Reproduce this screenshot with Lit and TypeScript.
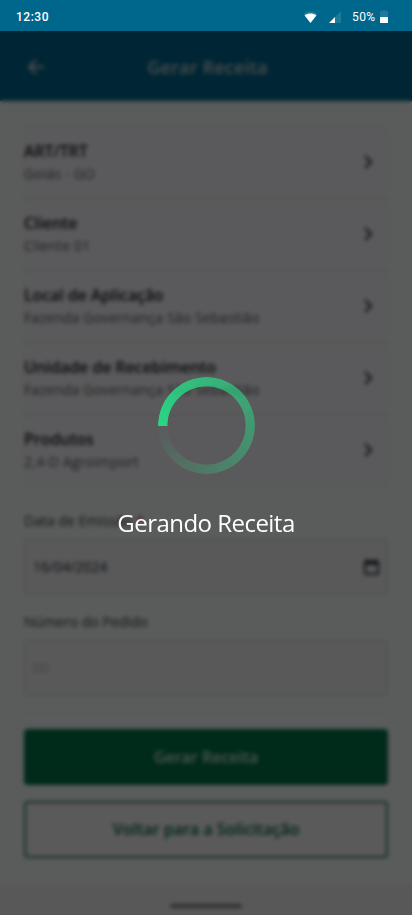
import { LitElement, html, css } from "lit";
import { customElement } from "lit/decorators.js";

const ROWS: [string, string][] = [
  ["ART/TRT", "Goiás - GO"],
  ["Cliente", "Cliente 01"],
  ["Local de Aplicação", "Fazenda Governança São Sebastião"],
  ["Unidade de Recebimento", "Fazenda Governança São Sebastião"],
  ["Produtos", "2,4-D Agroimport"],
];

@customElement("status-bar")
class StatusBar extends LitElement {
  static styles = css`
    :host {
      display: flex;
      align-items: center;
      height: 31px;
      box-sizing: border-box;
      padding: 2px 24px 0 16px;
      background: #00678c;
      color: #fff;
      font: 500 12px/16px Roboto, sans-serif;
    }
    .time { flex: 1; letter-spacing: 0.5px; }
    .level { font-weight: 400; margin-left: 11px; letter-spacing: 0.4px; width: 25px; white-space: nowrap; }
    svg { display: block; fill: #fff; }
    .cell { margin-left: 11px; }
    .battery { margin-left: 3px; }
    .dim { opacity: 0.12; }
  `;
  render() {
    return html`
      <span class="time">12:30</span>
      <svg width="15" height="12" viewBox="0 0 14 12">
        <path class="dim" d="M0 3C4-.7 10-.7 14 3L7 12Z" />
        <path d="M1.100 4.400C4.200 2 9.800 2 12.900 4.400L7 12Z" />
      </svg>
      <svg class="cell" width="12" height="12" viewBox="0 0 12 12">
        <path class="dim" d="M12 0V12H0Z" />
        <path d="M6 6V12H0Z" />
      </svg>
      <span class="level">50%</span>
      <svg class="battery" width="8" height="13" viewBox="0 0 8 13">
        <path class="dim" d="M2.500 0h3v1H8v6H0V1h2.500Z" />
        <path d="M0 7h8v5.400q0 .6-.6.6H.6Q0 13 0 12.400Z" />
      </svg>
    `;
  }
}

@customElement("app-root")
class AppRoot extends LitElement {
  static styles = css`
    :host {
      display: block;
      position: relative;
      height: 915px;
      overflow: hidden;
      font-family: "Open Sans", "Noto Sans", sans-serif;
      color: #222326;
      background: #fafefc;
    }
    * { box-sizing: border-box; }
    svg { display: block; fill: none; }
    .screen { display: flex; flex-direction: column; height: 884px; }
    header {
      display: grid;
      grid-template-columns: 24px 1fr 24px;
      align-items: center;
      flex: none;
      height: 70px;
      padding: 2px 24px 0;
      background: #006890;
      color: #c8d0d5;
    }
    h1 { margin: 0 0 0 3px; text-align: center; font-size: 18px; line-height: 24px; font-weight: 600; letter-spacing: 0.2px; }
    main { display: flex; flex-direction: column; flex: 1; padding: 25px 24px 0; background: #fafefc; }
    .list { border: 1px solid #e2e5e5; background: #fafaff; }
    .row {
      display: flex;
      align-items: center;
      justify-content: space-between;
      height: 72px;
      padding: 0 11px 2px 0;
      margin-left: -1px;
      border-bottom: 1px solid #d2d2d5;
    }
    .row:last-child { height: 71px; border: 0; }
    .name { font-size: 16px; line-height: 24px; font-weight: 600; letter-spacing: -0.1px; }
    .value { font-size: 14px; line-height: 21px; letter-spacing: 0.14px; color: #5c5d60; }
    label { font-size: 14px; line-height: 20px; color: #3c3d40; }
    .star { color: #d03040; margin-left: 4px; }
    .first { margin-top: 24px; }
    .second { margin-top: 17px; }
    .field {
      display: flex;
      align-items: center;
      justify-content: space-between;
      height: 56px;
      margin-top: 8px;
      padding: 0 8px 1px;
      border: 1px solid #c8cacc;
      border-radius: 4px;
      background: #f5f6fa;
      font-size: 14px;
      color: #303134;
    }
    .empty { color: #c2c3c7; }
    .actions {
      display: flex;
      flex-direction: column;
      gap: 16px;
      margin-top: 16px;
      padding-top: 16px;
      border-top: 1px solid #dfe2e1;
    }
    .button {
      display: flex;
      align-items: center;
      justify-content: center;
      height: 56px;
      border-radius: 4px;
      background: #007546;
      color: #d8e8e0;
      font-size: 16px;
      font-weight: 600;
    }
    .outline { height: 57px; padding-bottom: 2px; border: 2px solid #348066; background: #faf9f9; color: #006c42; }
    .navigation { display: flex; justify-content: center; height: 31px; padding-top: 20px; background: #f4f4f4; }
    .handle { width: 72px; height: 4px; border-radius: 2px; background: #808080; }
    .overlay {
      position: absolute;
      inset: 31px 0 0;
      display: flex;
      flex-direction: column;
      align-items: center;
      padding-top: 346px;
      background: rgba(0, 0, 0, 0.64);
      backdrop-filter: blur(2px);
      color: #fff;
    }
    .spinner {
      width: 97px;
      height: 97px;
      margin-left: 1px;
      border-radius: 50%;
      background: conic-gradient(from 270deg, #2ad585, rgba(42, 213, 133, 0));
      -webkit-mask: radial-gradient(circle, transparent 38.7px, #000 39.5px);
      mask: radial-gradient(circle, transparent 38.7px, #000 39.5px);
    }
    .message { margin-top: 33px; font-size: 24px; line-height: 32px; letter-spacing: -0.53px; }
  `;

  render() {
    return html`
      <div class="screen">
        <status-bar></status-bar>
        <header>
          <svg width="24" height="24" viewBox="0 0 24 24" stroke="#d8dee2" stroke-width="2">
            <path d="M20 12H5M12 5l-7 7 7 7" />
          </svg>
          <h1>Gerar Receita</h1>
        </header>
        <main>
          <div class="list">
            ${ROWS.map(
              ([name, value]) => html`
                <div class="row">
                  <div>
                    <div class="name">${name}</div>
                    <div class="value">${value}</div>
                  </div>
                  <svg width="16" height="16" viewBox="0 0 16 16" stroke="#303134" stroke-width="2.2">
                    <path d="M5 2l6 6-6 6" />
                  </svg>
                </div>
              `
            )}
          </div>
          <label class="first">Data de Emissão<span class="star">*</span></label>
          <div class="field">
            <span>16/04/2024</span>
            <svg width="15" height="16" viewBox="0 0 16 17">
              <path fill="#303134" fill-rule="evenodd" d="M3 0h2v1.500h6V0h2v1.500h1q2 0 2 2V15q0 2-2 2H2q-2 0-2-2V3.500q0-2 2-2h1ZM2 6v9h12V6Z" />
            </svg>
          </div>
          <label class="second">Número do Pedido</label>
          <div class="field empty"><span>00</span></div>
          <div class="actions">
            <div class="button">Gerar Receita</div>
            <div class="button outline">Voltar para a Solicitação</div>
          </div>
        </main>
      </div>
      <div class="navigation"><div class="handle"></div></div>
      <div class="overlay">
        <div class="spinner"></div>
        <div class="message">Gerando Receita</div>
      </div>
    `;
  }
}
